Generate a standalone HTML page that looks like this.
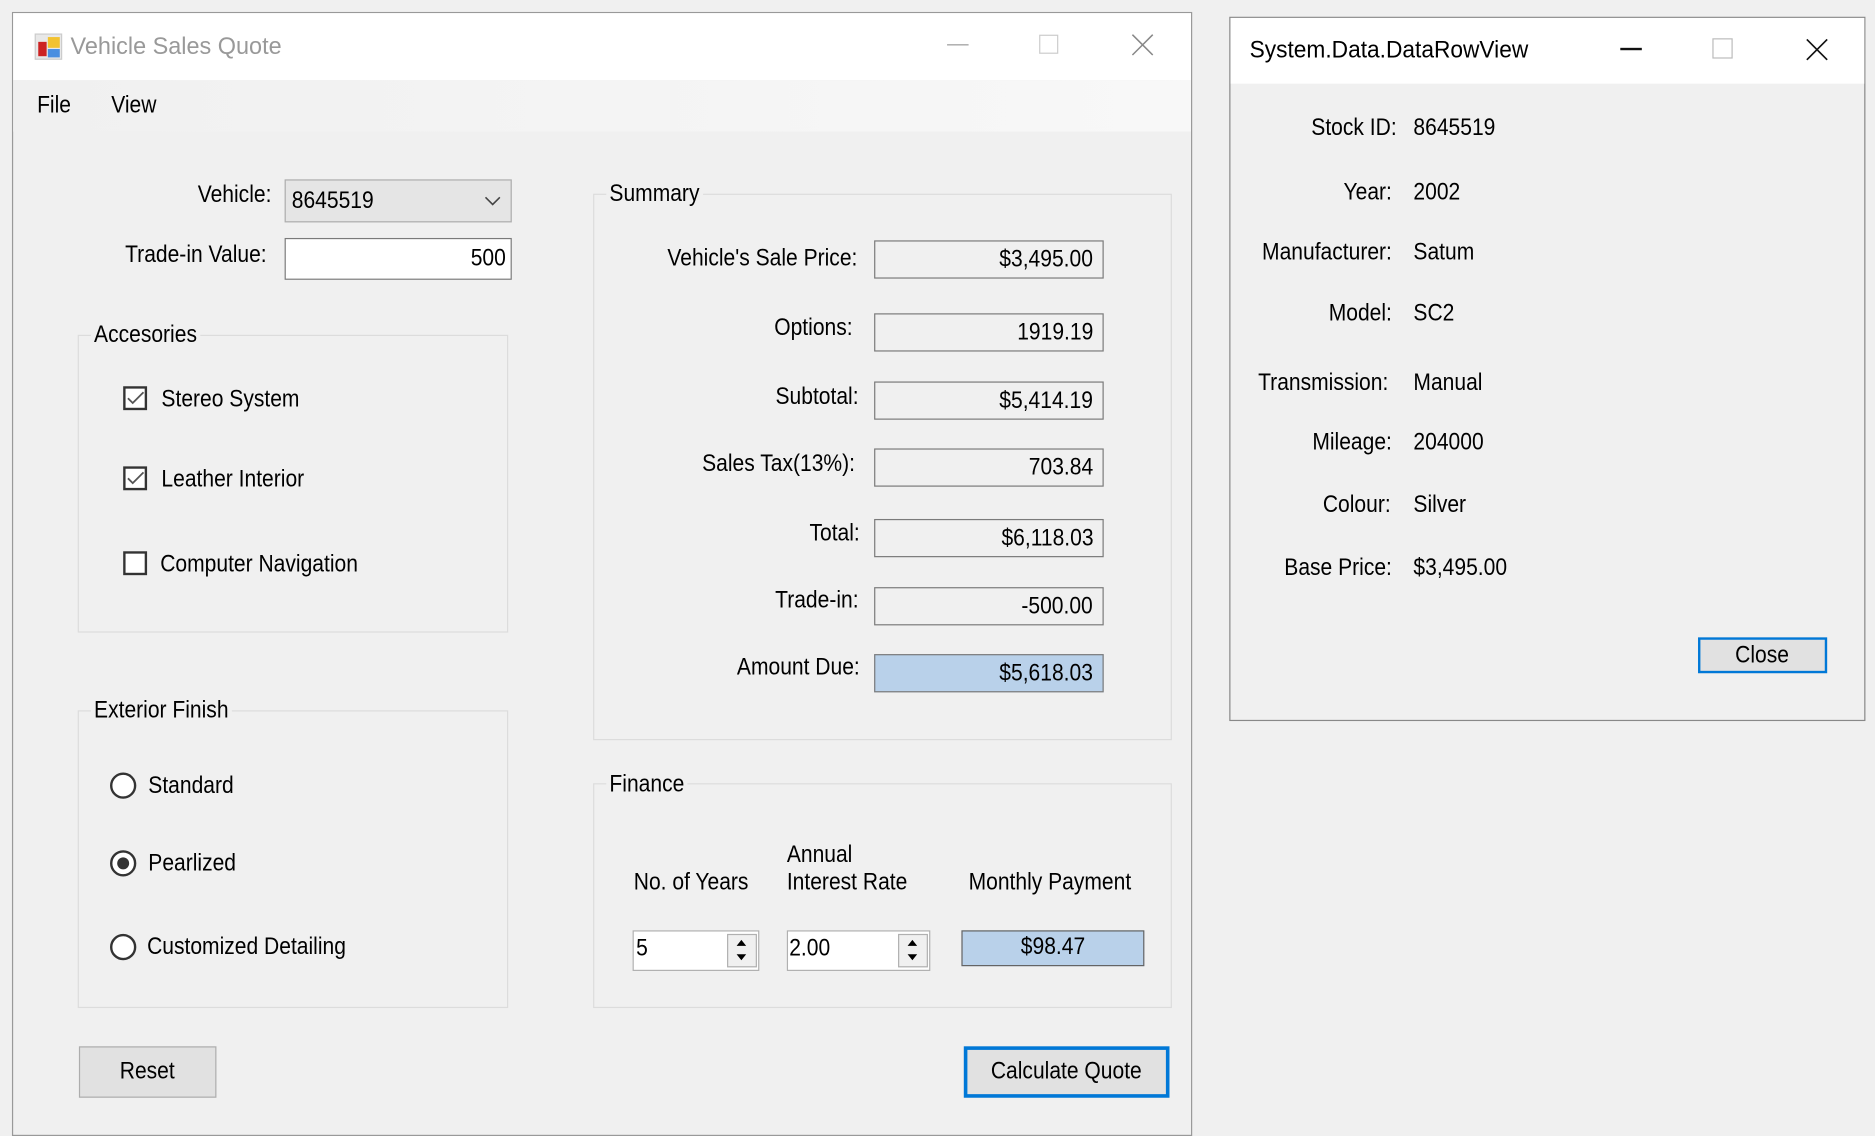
<!DOCTYPE html>
<html><head><meta charset="utf-8"><style>
html,body{margin:0;padding:0;width:1875px;height:1134px;overflow:hidden;background:#f0f0f0;}
#s{position:absolute;left:0;top:0;width:1568px;height:948px;transform:scale(1.19579);transform-origin:0 0;font-family:"Liberation Sans Narrow","Liberation Sans",sans-serif;font-size:20px;color:#000;}
#s div{position:absolute;box-sizing:border-box;}
.t{white-space:nowrap;line-height:24px;height:24px;transform:scaleX(.88);transform-origin:0 50%;}
.r{text-align:right;transform-origin:100% 50%;}
.nt{transform:none;}
.grp{border:1px solid #dcdcdc;}
.lg{background:#f0f0f0;padding:0 3px;}
.box{border:1px solid #7a7a7a;background:#f0f0f0;text-align:right;padding-right:8px;line-height:30px;height:32px;white-space:nowrap;}
.box span{display:inline-block;transform:scaleX(.88);transform-origin:100% 50%;}
.btn span,.c span{display:inline-block;transform:scaleX(.88);transform-origin:50% 50%;}
.cb{width:20px;height:20px;border:2px solid #333;background:#fff;}
.rb{width:22px;height:22px;border:2px solid #333;border-radius:50%;background:#fff;}
.btn{background:#e1e1e1;border:1px solid #adadad;text-align:center;white-space:nowrap;}
</style></head><body><div id="s">
<div style="left:10px;top:10px;width:987px;height:940px;border:1px solid #999;background:#f0f0f0;"></div>
<div style="left:11px;top:11px;width:985px;height:56px;background:#fff;"></div>
<div style="left:29px;top:28px;width:23px;height:22px;background:#e8e8e8;border:1px solid #ccc;">
 <div style="left:2px;top:6px;width:7px;height:12px;background:#c22;"></div>
 <div style="left:10px;top:2px;width:10px;height:9px;background:#f2c230;"></div>
 <div style="left:10px;top:12px;width:10px;height:7px;background:#4a8ee0;"></div>
</div>
<div class="t nt" style="left:59px;top:27px;color:#999;transform:scaleX(.98);">Vehicle Sales Quote</div>
<div style="left:792px;top:37px;width:18px;height:1px;background:#999;"></div>
<div style="left:869px;top:29px;width:16px;height:16px;border:1px solid #ccc;"></div>
<svg style="position:absolute;left:946px;top:28px" width="19" height="19"><path d="M1 1L18 18M18 1L1 18" stroke="#888" stroke-width="1.3"/></svg>
<div style="left:11px;top:67px;width:985px;height:43px;background:linear-gradient(90deg,#f0f0f0,#f8f8f8);"></div>
<div class="t" style="left:31px;top:76px;">File</div>
<div class="t" style="left:93px;top:76px;">View</div>

<div class="t r" style="left:100px;top:151px;width:127px;">Vehicle:</div>
<div style="left:238px;top:150px;width:190px;height:36px;background:#e5e5e5;border:1px solid #adadad;"></div>
<div class="t" style="left:244px;top:156px;">8645519</div>
<svg style="position:absolute;left:405px;top:163px" width="14" height="10"><path d="M1 2L7 8L13 2" stroke="#444" fill="none" stroke-width="1.3"/></svg>
<div class="t r" style="left:80px;top:201px;width:143px;">Trade-in Value:</div>
<div style="left:238px;top:199px;width:190px;height:35px;background:#fff;border:1px solid #7a7a7a;"></div>
<div class="t r" style="left:300px;top:204px;width:123px;">500</div>

<div class="grp" style="left:65px;top:280px;width:360px;height:249px;"></div>
<div class="t lg" style="left:76px;top:268px;">Accesories</div>
<div class="cb" style="left:103px;top:323px;"></div>
<svg style="position:absolute;left:106px;top:327px" width="15" height="13"><path d="M1 6L5 10L14 1" stroke="#555" fill="none" stroke-width="1.5"/></svg>
<div class="t" style="left:135px;top:322px;">Stereo System</div>
<div class="cb" style="left:103px;top:390px;"></div>
<svg style="position:absolute;left:106px;top:394px" width="15" height="13"><path d="M1 6L5 10L14 1" stroke="#555" fill="none" stroke-width="1.5"/></svg>
<div class="t" style="left:135px;top:389px;">Leather Interior</div>
<div class="cb" style="left:103px;top:461px;"></div>
<div class="t" style="left:134px;top:460px;">Computer Navigation</div>

<div class="grp" style="left:65px;top:594px;width:360px;height:249px;"></div>
<div class="t lg" style="left:76px;top:582px;">Exterior Finish</div>
<div class="rb" style="left:92px;top:646px;"></div>
<div class="t" style="left:124px;top:645px;">Standard</div>
<div class="rb" style="left:92px;top:711px;"><div style="left:4px;top:4px;width:10px;height:10px;border-radius:50%;background:#333;"></div></div>
<div class="t" style="left:124px;top:710px;">Pearlized</div>
<div class="rb" style="left:92px;top:781px;"></div>
<div class="t" style="left:123px;top:780px;">Customized Detailing</div>

<div class="btn" style="left:66px;top:875px;width:115px;height:43px;line-height:41px;"><span>Reset</span></div>

<div class="grp" style="left:496px;top:162px;width:484px;height:457px;"></div>
<div class="t lg" style="left:507px;top:150px;">Summary</div>
<div class="t r" style="left:500px;top:204px;width:217px;">Vehicle's Sale Price:</div>
<div class="box" style="left:731px;top:201px;width:192px;"><span>$3,495.00</span></div>
<div class="t r" style="left:500px;top:262px;width:213px;">Options:</div>
<div class="box" style="left:731px;top:262px;width:192px;"><span>1919.19</span></div>
<div class="t r" style="left:500px;top:320px;width:218px;">Subtotal:</div>
<div class="box" style="left:731px;top:319px;width:192px;"><span>$5,414.19</span></div>
<div class="t r" style="left:500px;top:376px;width:215px;">Sales Tax(13%):</div>
<div class="box" style="left:731px;top:375px;width:192px;"><span>703.84</span></div>
<div class="t r" style="left:500px;top:434px;width:219px;">Total:</div>
<div class="box" style="left:731px;top:434px;width:192px;"><span>$6,118.03</span></div>
<div class="t r" style="left:500px;top:490px;width:218px;">Trade-in:</div>
<div class="box" style="left:731px;top:491px;width:192px;"><span>-500.00</span></div>
<div class="t r" style="left:500px;top:546px;width:219px;">Amount Due:</div>
<div class="box" style="left:731px;top:547px;width:192px;background:#b9d1ea;"><span>$5,618.03</span></div>

<div class="grp" style="left:496px;top:655px;width:484px;height:188px;"></div>
<div class="t lg" style="left:507px;top:644px;">Finance</div>
<div class="t" style="left:530px;top:726px;">No. of Years</div>
<div class="t" style="left:658px;top:703px;">Annual</div>
<div class="t" style="left:658px;top:726px;">Interest Rate</div>
<div class="t" style="left:810px;top:726px;">Monthly Payment</div>
<div style="left:529px;top:778px;width:106px;height:34px;background:#fff;border:1px solid #b0b0b0;">
 <div style="left:78px;top:2px;width:25px;height:28px;background:#f0f0f0;border:1px solid #b0b0b0;"></div>
</div>
<div class="t" style="left:532px;top:781px;">5</div>
<div style="left:658px;top:778px;width:120px;height:34px;background:#fff;border:1px solid #b0b0b0;">
 <div style="left:92px;top:2px;width:25px;height:28px;background:#f0f0f0;border:1px solid #b0b0b0;"></div>
</div>
<div class="t" style="left:660px;top:781px;">2.00</div>
<svg style="position:absolute;left:612px;top:783px" width="16" height="24"><path d="M4 8L8 3L12 8Z M4 15L12 15L8 20Z" fill="#000"/></svg>
<svg style="position:absolute;left:755px;top:783px" width="16" height="24"><path d="M4 8L8 3L12 8Z M4 15L12 15L8 20Z" fill="#000"/></svg>
<div class="c" style="left:804px;top:778px;width:153px;height:30px;background:#b9d1ea;border:1px solid #646464;text-align:center;line-height:27px;"><span>$98.47</span></div>

<div class="btn" style="left:806px;top:875px;width:172px;height:43px;border:3px solid #0078d7;line-height:37px;"><span>Calculate Quote</span></div>

<div style="left:1028px;top:14px;width:532px;height:589px;border:1px solid #888;background:#f0f0f0;"></div>
<div style="left:1029px;top:15px;width:530px;height:55px;background:#fff;"></div>
<div class="t" style="left:1045px;top:30px;transform:scaleX(.95);">System.Data.DataRowView</div>
<div style="left:1355px;top:40px;width:18px;height:2px;background:#111;"></div>
<div style="left:1432px;top:32px;width:17px;height:17px;border:1px solid #bbb;"></div>
<svg style="position:absolute;left:1510px;top:32px" width="19" height="19"><path d="M1 1L18 18M18 1L1 18" stroke="#111" stroke-width="1.4"/></svg>
<div class="t r" style="left:1030px;top:95px;width:138px;">Stock ID:</div><div class="t" style="left:1182px;top:95px;">8645519</div>
<div class="t r" style="left:1030px;top:149px;width:134px;">Year:</div><div class="t" style="left:1182px;top:149px;">2002</div>
<div class="t r" style="left:1030px;top:199px;width:134px;">Manufacturer:</div><div class="t" style="left:1182px;top:199px;">Satum</div>
<div class="t r" style="left:1030px;top:250px;width:134px;">Model:</div><div class="t" style="left:1182px;top:250px;">SC2</div>
<div class="t r" style="left:1030px;top:308px;width:131px;">Transmission:</div><div class="t" style="left:1182px;top:308px;">Manual</div>
<div class="t r" style="left:1030px;top:358px;width:134px;">Mileage:</div><div class="t" style="left:1182px;top:358px;">204000</div>
<div class="t r" style="left:1030px;top:410px;width:133px;">Colour:</div><div class="t" style="left:1182px;top:410px;">Silver</div>
<div class="t r" style="left:1030px;top:463px;width:134px;">Base Price:</div><div class="t" style="left:1182px;top:463px;">$3,495.00</div>
<div class="btn" style="left:1420px;top:533px;width:108px;height:30px;border:2px solid #0078d7;line-height:27px;"><span>Close</span></div>
</div></body></html>
